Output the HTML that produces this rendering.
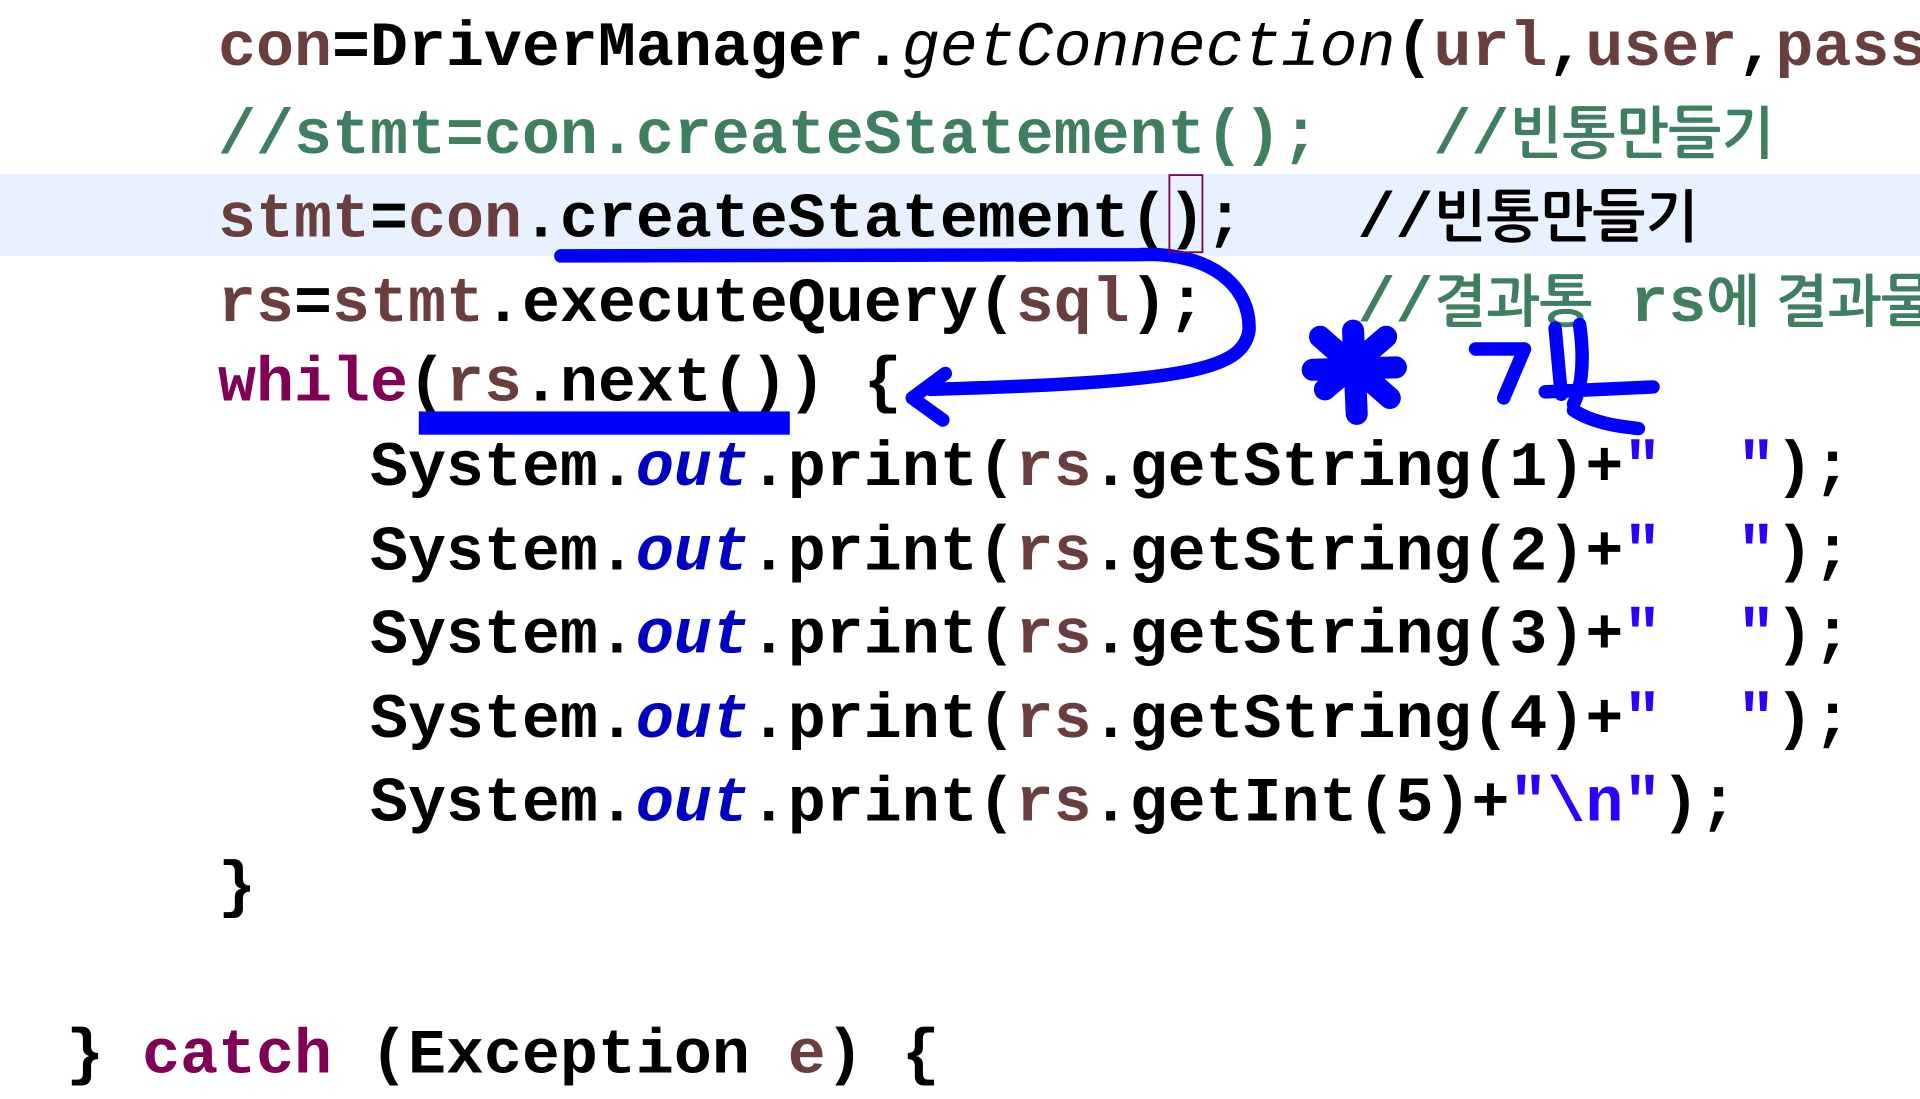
<!DOCTYPE html>
<html><head><meta charset="utf-8"><style>
html,body{margin:0;padding:0;background:#fff;overflow:hidden;width:1920px;height:1080px}
#w{position:absolute;left:0;top:0;width:1568px;height:882px;transform:scale(1.22449);transform-origin:0 0}
.hl{position:absolute;left:0;top:142px;width:1568px;height:67px;background:#e8f2fe}
.l{position:absolute;left:54px;height:68.6px;line-height:68.6px;white-space:pre;font-family:"Liberation Mono","NanumGothic",monospace;font-size:51.7px;font-weight:bold;color:#000}
.c{color:#3f7f5f}.k{color:#7f0055}.s{color:#2a00ff}.o{color:#0000c0;font-style:italic}.v{color:#6a3e3e}
.kr{font-family:"NanumGothic","Noto Sans CJK KR",sans-serif;font-weight:bold;font-size:46px}
svg{position:absolute;left:0;top:0}
</style></head><body><div id="w">
<div class="hl"></div>
<div class="l" style="top:6px">    <span class="v">con</span>=DriverManager.<span style="font-style:italic;font-weight:normal">getConnection</span>(<span class="v">url</span>,<span class="v">user</span>,<span class="v">pass</span></div>
<div class="l" style="top:74.6px"><span class="c">    //stmt=con.createStatement();   //<span class="kr">빈통만들기</span></span></div>
<div class="l" style="top:143.2px">    <span class="v">stmt</span>=<span class="v">con</span>.createStatement();   //<span class="kr">빈통만들기</span></div>
<div class="l" style="top:211.8px">    <span class="v">rs</span>=<span class="v">stmt</span>.executeQuery(<span class="v">sql</span>);    <span class="c">//<span class="kr">결과통</span> rs<span class="kr">에 결과물</span></span></div>
<div class="l" style="top:280.4px">    <span class="k">while</span>(<span class="v">rs</span>.next()) {</div>
<div class="l" style="top:349px">        System.<span class="o">out</span>.print(<span class="v">rs</span>.getString(1)+<span class="s">"  "</span>);</div>
<div class="l" style="top:417.6px">        System.<span class="o">out</span>.print(<span class="v">rs</span>.getString(2)+<span class="s">"  "</span>);</div>
<div class="l" style="top:486.2px">        System.<span class="o">out</span>.print(<span class="v">rs</span>.getString(3)+<span class="s">"  "</span>);</div>
<div class="l" style="top:554.8px">        System.<span class="o">out</span>.print(<span class="v">rs</span>.getString(4)+<span class="s">"  "</span>);</div>
<div class="l" style="top:623.4px">        System.<span class="o">out</span>.print(<span class="v">rs</span>.getInt(5)+<span class="s">"\n"</span>);</div>
<div class="l" style="top:692px">    }</div>
<div class="l" style="top:829px">} <span class="k">catch</span> (Exception <span class="v">e</span>) {</div>
<svg width="1568" height="882" viewBox="0 0 1568 882">
<g fill="none" stroke="#0000ff" stroke-width="11" stroke-linecap="round" stroke-linejoin="round">
<path d="M458 209 L930 208 C990 205 1022 235 1020 270 C1015 302 970 312 760 318"/>
<path d="M772 305 L745 325 L770 343"/>
<path stroke-width="18" d="M1078 275 L1135 325 M1132 275 L1082 318 M1105 270 L1108 338 M1072 302 L1140 300"/>
<path d="M1205 285 L1245 285 L1228 325 M1270 268 L1275 322 M1290 265 C1295 300 1290 320 1285 330 M1262 320 L1350 316 M1285 335 C1300 345 1320 348 1338 350"/>
</g>
<rect x="342" y="336" width="303" height="19" fill="#0000ff"/>
<rect x="955" y="143" width="27" height="63" fill="none" stroke="#7f0055" stroke-width="1.5"/>
</svg>
</div></body></html>
